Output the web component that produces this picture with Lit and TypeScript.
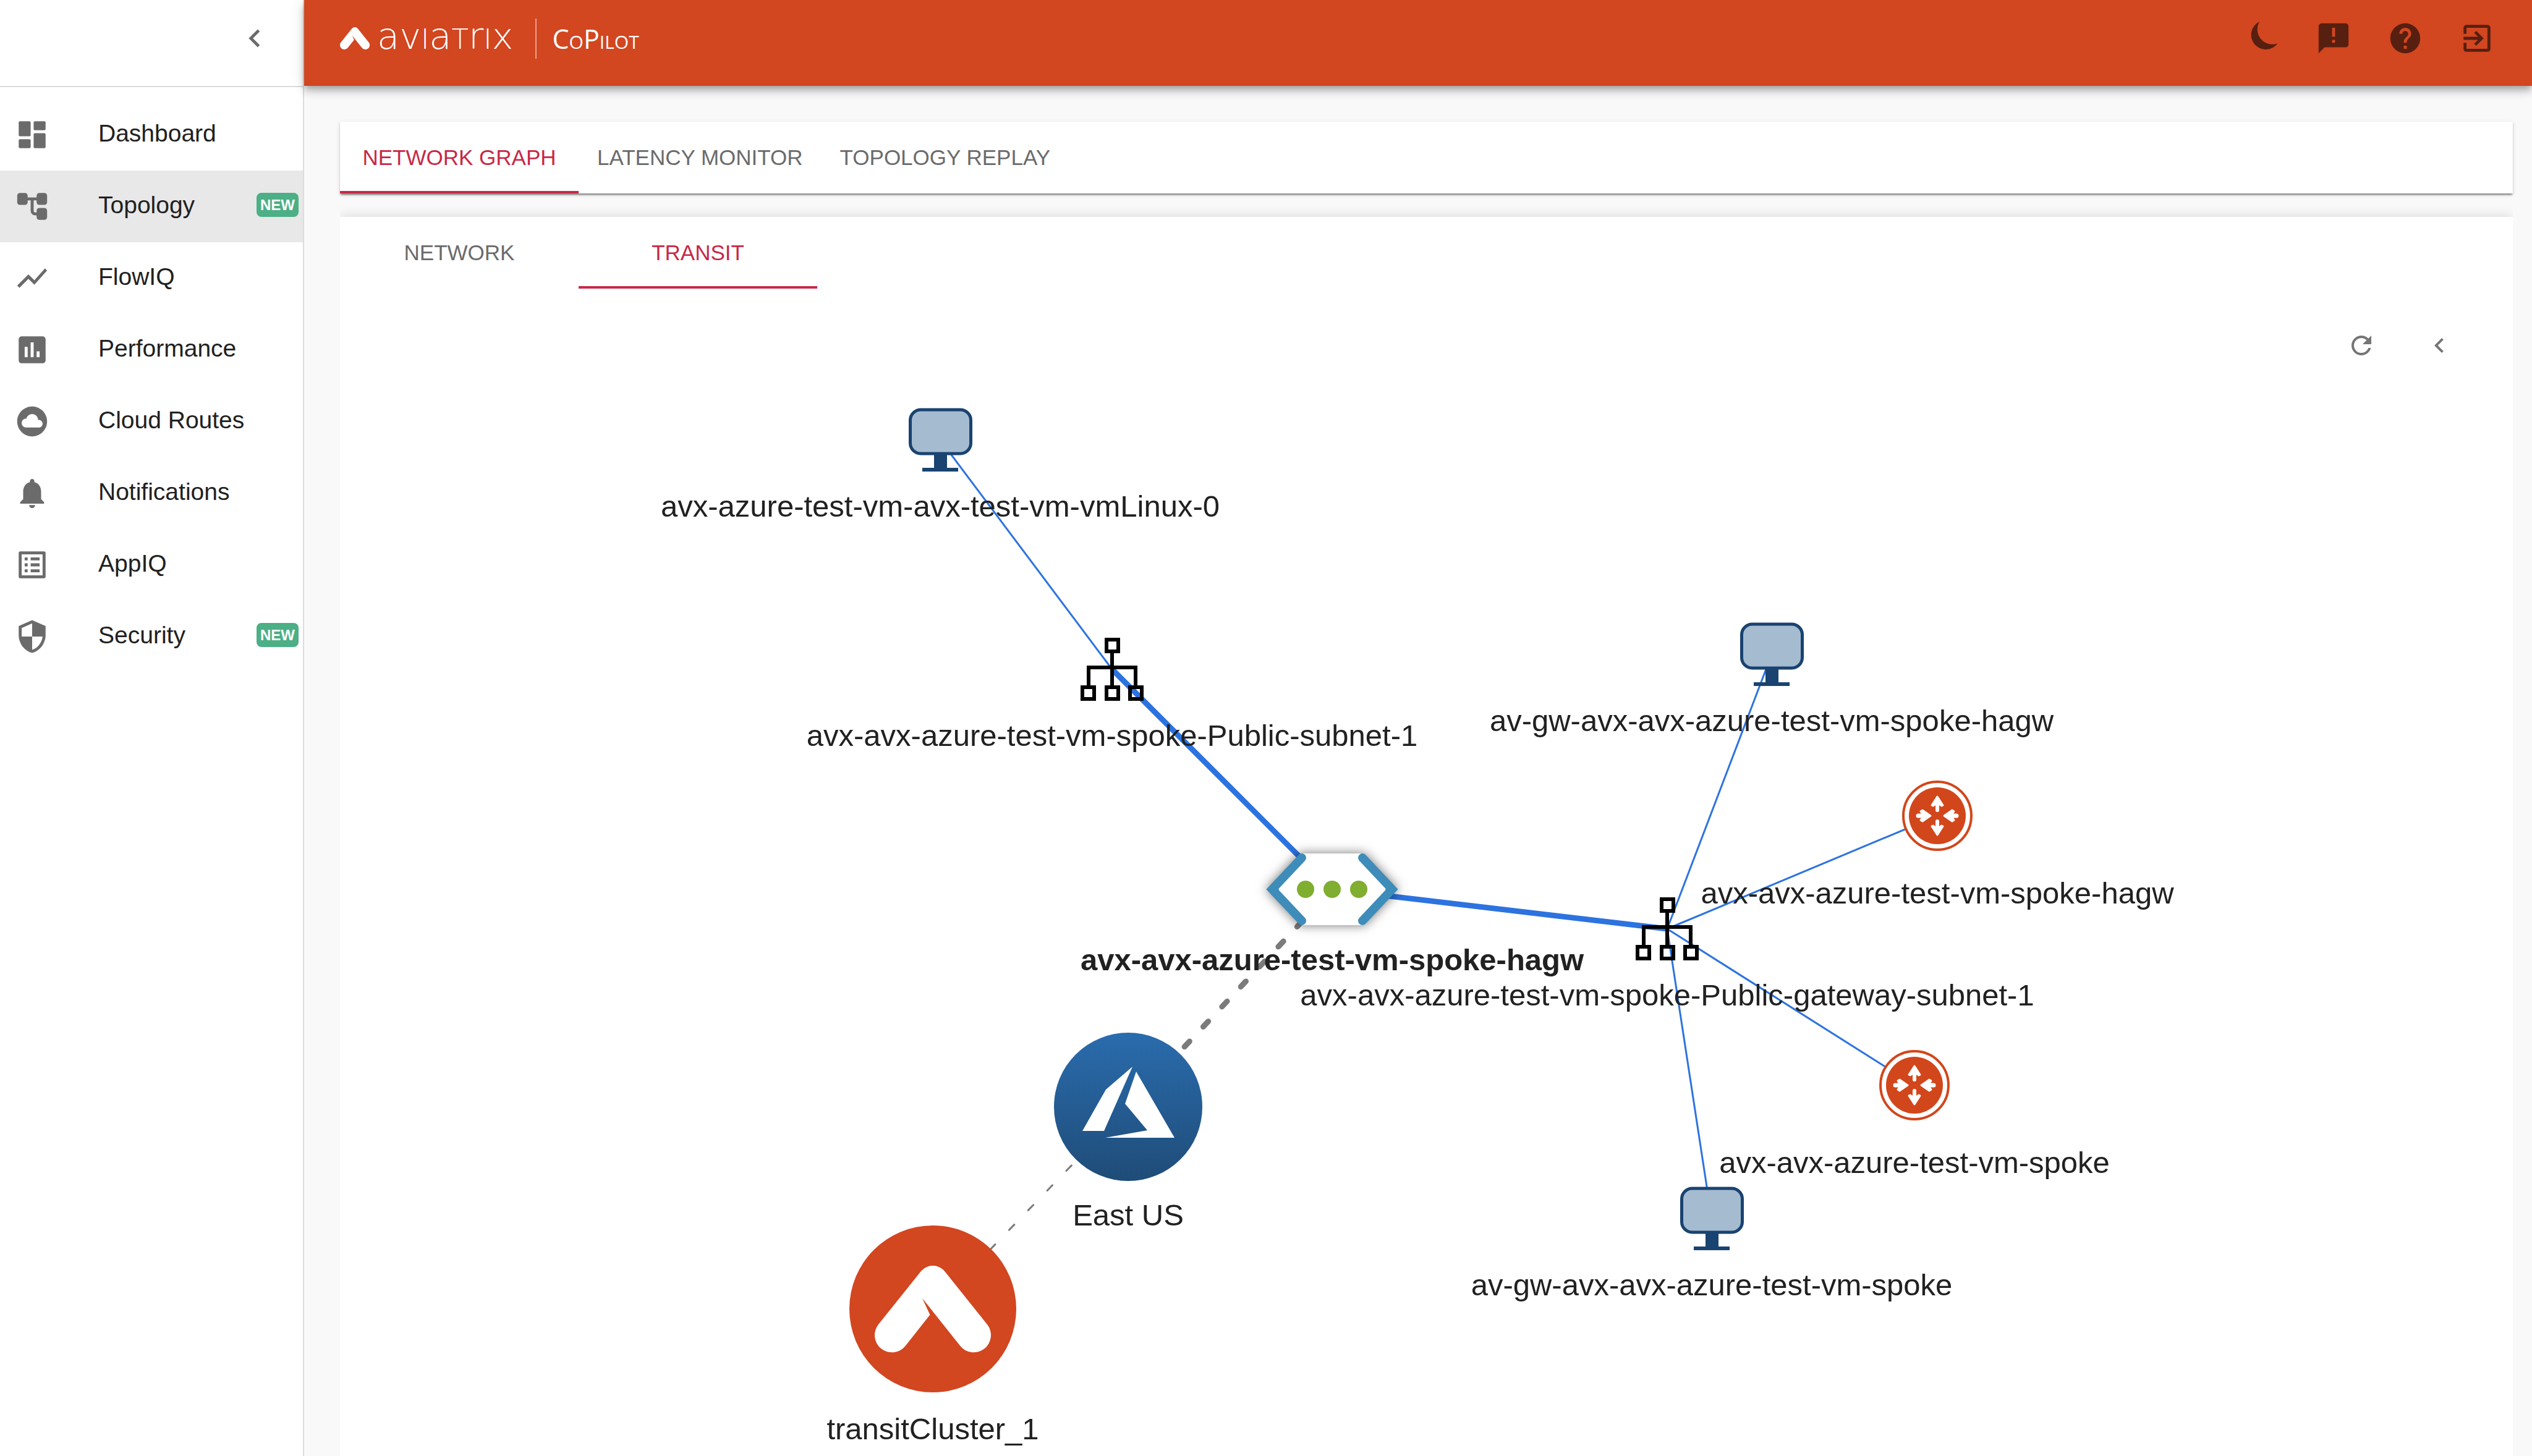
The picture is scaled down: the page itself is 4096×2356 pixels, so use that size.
import { LitElement, html, svg, css, nothing } from "lit";
import { customElement, property, state } from "lit/decorators.js";
import { classMap } from "lit/directives/class-map.js";

const MARK_PATH =
  "M-20 -63A26 26 0 0 1 20 -63L91 26A28.5 28.5 0 0 1 46 62L-17.6 -17.8L-4.7 9.8L-46 62A28.5 28.5 0 0 1 -91 26Z";

const ICONS = {
  dashboard: svg`<rect x="3" y="3" width="8" height="10" rx=".8"/><rect x="3" y="15" width="8" height="6" rx=".8"/><rect x="13" y="3" width="8" height="6" rx=".8"/><rect x="13" y="11" width="8" height="10" rx=".8"/>`,
  topology: svg`<rect x="2" y="3" width="7" height="8" rx="1.8"/><rect x="15" y="3" width="7" height="8" rx="1.8"/><rect x="15" y="13" width="7" height="8" rx="1.8"/><path d="M8 7h8M12 7v8a2 2 0 0 0 2 2h2" fill="none" stroke="currentColor" stroke-width="2"/>`,
  flow: svg`<path d="M3.5 18.49l6-6.01 4 4L22 6.92l-1.41-1.41-7.09 7.97-4-4L2 16.99z"/>`,
  performance: svg`<path d="M19 3H5c-1.1 0-2 .9-2 2v14c0 1.1.9 2 2 2h14c1.1 0 2-.9 2-2V5c0-1.1-.9-2-2-2zM9 17H7v-7h2v7zm4 0h-2V7h2v10zm4 0h-2v-4h2v4z"/>`,
  cloud: svg`<path d="M12 2C6.48 2 2 6.48 2 12s4.48 10 10 10 10-4.48 10-10S17.52 2 12 2zm4.5 14H8c-1.66 0-3-1.34-3-3s1.34-3 3-3l.14.01C8.58 8.28 10.13 7 12 7c2.21 0 4 1.79 4 4h.5c1.38 0 2.5 1.12 2.5 2.5S17.88 16 16.5 16z"/>`,
  bell: svg`<path d="M12 22c1.1 0 2-.9 2-2h-4c0 1.1.89 2 2 2zm6-6v-5c0-3.07-1.64-5.64-4.5-6.32V4c0-.83-.67-1.5-1.5-1.5s-1.5.67-1.5 1.5v.68C7.63 5.36 6 7.92 6 11v5l-2 2v1h16v-1l-2-2z"/>`,
  list: svg`<path d="M19 5v14H5V5h14m1.1-2H3.9c-.5 0-.9.4-.9.9v16.2c0 .4.4.9.9.9h16.2c.4 0 .9-.5.9-.9V3.9c0-.5-.5-.9-.9-.9zM11 7h6v2h-6V7zm0 4h6v2h-6v-2zm0 4h6v2h-6zM7 7h2v2H7zm0 4h2v2H7zm0 4h2v2H7z"/>`,
  security: svg`<path d="M12 1L3 5v6c0 5.55 3.84 10.74 9 12 5.16-1.26 9-6.45 9-12V5l-9-4zm0 10.99h7c-.53 4.12-3.28 7.79-7 8.94V12H5V6.3l7-3.11v8.8z"/>`,
  moon: svg`<path d="M10.5 .8A9.8 9.8 0 1 0 22.6 15.4A10 10 0 0 1 10.5 .8Z"/>`,
  feedback: svg`<path d="M20 2H4c-1.1 0-1.99.9-1.99 2L2 22l4-4h14c1.1 0 2-.9 2-2V4c0-1.1-.9-2-2-2zm-7 9h-2V5h2v6zm0 4h-2v-2h2v2z"/>`,
  help: svg`<path d="M12 2C6.48 2 2 6.48 2 12s4.48 10 10 10 10-4.48 10-10S17.52 2 12 2zm1 17h-2v-2h2v2zm2.07-7.75l-.9.92C13.45 12.9 13 13.5 13 15h-2v-.5c0-1.1.45-2.1 1.17-2.83l1.24-1.26c.37-.36.59-.86.59-1.41 0-1.1-.9-2-2-2s-2 .9-2 2H8c0-2.21 1.79-4 4-4s4 1.79 4 4c0 .88-.36 1.68-.93 2.25z"/>`,
  exit: svg`<path d="M10.09 15.59L11.5 17l5-5-5-5-1.41 1.41L12.67 11H3v2h9.67l-2.58 2.59zM19 3H5c-1.11 0-2 .9-2 2v4h2V5h14v14H5v-4H3v4c0 1.1.89 2 2 2h14c1.1 0 2-.9 2-2V5c0-1.1-.9-2-2-2z"/>`,
  chevron: svg`<path d="M15.41 7.41L14 6l-6 6 6 6 1.41-1.41L10.83 12z"/>`,
  refresh: svg`<path d="M17.65 6.35C16.2 4.9 14.21 4 12 4c-4.42 0-7.99 3.58-7.99 8s3.57 8 7.99 8c3.73 0 6.84-2.55 7.73-6h-2.08c-.82 2.33-3.04 4-5.65 4-3.31 0-6-2.69-6-6s2.69-6 6-6c1.66 0 3.14.69 4.22 1.78L13 11h7V4l-2.35 2.35z"/>`,
};

type IconName = keyof typeof ICONS;

@customElement("app-icon")
export class AppIcon extends LitElement {
  @property() name: IconName = "dashboard";

  static styles = css`
    :host {
      display: block;
      flex: none;
      width: 58px;
      height: 58px;
    }
    .icon {
      display: block;
      width: 100%;
      height: 100%;
      fill: currentColor;
    }
  `;

  render() {
    return html`<svg class="icon" viewBox="0 0 24 24" aria-hidden="true">${ICONS[this.name]}</svg>`;
  }
}

interface NavItem {
  label: string;
  icon: IconName;
  isNew?: boolean;
}

const NAV: NavItem[] = [
  { label: "Dashboard", icon: "dashboard" },
  { label: "Topology", icon: "topology", isNew: true },
  { label: "FlowIQ", icon: "flow" },
  { label: "Performance", icon: "performance" },
  { label: "Cloud Routes", icon: "cloud" },
  { label: "Notifications", icon: "bell" },
  { label: "AppIQ", icon: "list" },
  { label: "Security", icon: "security", isNew: true },
];

@customElement("app-sidebar")
export class AppSidebar extends LitElement {
  @state() private current = "Topology";

  static styles = css`
    :host {
      display: flex;
      flex-direction: column;
      background: #fff;
      border-right: 2px solid #dcdcdc;
      box-sizing: border-box;
      color: #212121;
    }
    .top {
      display: flex;
      justify-content: flex-end;
      align-items: center;
      height: 124px;
      padding: 0 49px 15px 0;
      border-bottom: 2px solid #dcdcdc;
    }
    .collapse {
      padding: 0;
      border: 0;
      background: none;
      color: #6b6b6b;
      cursor: pointer;
    }
    .menu {
      margin: 0;
      padding: 19px 0;
      list-style: none;
    }
    .link {
      display: flex;
      align-items: center;
      height: 116px;
      box-sizing: border-box;
      padding: 0 7px 0 23px;
      color: inherit;
      text-decoration: none;
    }
    .current {
      background: #e8e8e8;
    }
    .glyph {
      color: #6b6b6b;
    }
    .label {
      flex: 1;
      margin-left: 78px;
      padding-bottom: 5px;
      font-size: 39px;
      line-height: 58px;
    }
    .badge {
      padding: 0 6px;
      margin-bottom: 5px;
      border-radius: 8px;
      background: #4caf86;
      color: #fff;
      font-size: 24px;
      font-weight: 700;
      line-height: 39px;
    }
  `;

  render() {
    return html`
      <div class="top">
        <button class="collapse" aria-label="Collapse menu"><app-icon name="chevron"></app-icon></button>
      </div>
      <nav aria-label="Main">
        <ul class="menu">
          ${NAV.map(
            (item) => html`<li>
              <a
                class=${classMap({ link: true, current: item.label === this.current })}
                href="#${item.icon}"
                aria-current=${item.label === this.current ? "page" : nothing}
                @click=${() => (this.current = item.label)}
              >
                <app-icon class="glyph" name=${item.icon}></app-icon>
                <span class="label">${item.label}</span>
                ${item.isNew ? html`<span class="badge">NEW</span>` : nothing}
              </a>
            </li>`
          )}
        </ul>
      </nav>
    `;
  }
}

@customElement("app-header")
export class AppHeader extends LitElement {
  static styles = css`
    :host {
      display: flex;
      align-items: center;
      justify-content: space-between;
      height: 124px;
      padding: 0 60px 15px 58px;
      background: #d24620;
      color: #fff;
      box-shadow: 0 5px 10px -2px rgba(0, 0, 0, 0.2), 0 10px 12px rgba(0, 0, 0, 0.14),
        0 2px 24px rgba(0, 0, 0, 0.12);
    }
    .brand {
      display: flex;
      align-items: center;
      color: inherit;
      text-decoration: none;
      white-space: nowrap;
    }
    .mark {
      width: 48px;
      height: 36px;
      fill: currentColor;
    }
    .name {
      margin-left: 12px;
      padding-bottom: 9px;
      font-family: "DejaVu Sans", sans-serif;
      font-weight: 200;
      font-size: 59px;
      line-height: 56px;
    }
    .cap {
      font-variant: small-caps;
      font-size: 64px;
      line-height: 56px;
    }
    .product {
      margin-left: 36px;
      padding-left: 25px;
      border-left: 2px solid rgba(255, 255, 255, 0.5);
      font-family: "Open Sans", sans-serif;
      font-variant: small-caps;
      font-size: 43px;
      line-height: 65px;
    }
    .actions {
      display: flex;
      gap: 58px;
    }
    .action {
      padding: 0;
      border: 0;
      background: none;
      color: #571f0f;
      cursor: pointer;
    }
  `;

  render() {
    return html`
      <a class="brand" href="#home">
        <svg class="mark" viewBox="-97 -72 194 144" aria-hidden="true"><path d=${MARK_PATH} /></svg>
        <span class="name">av<span class="cap">i</span>a<span class="cap">t</span>r<span class="cap">i</span>x</span>
        <span class="product">CoPilot</span>
      </a>
      <div class="actions">
        <button class="action" aria-label="Dark mode"><app-icon name="moon"></app-icon></button>
        <button class="action" aria-label="Feedback"><app-icon name="feedback"></app-icon></button>
        <button class="action" aria-label="Help"><app-icon name="help"></app-icon></button>
        <button class="action" aria-label="Sign out"><app-icon name="exit"></app-icon></button>
      </div>
    `;
  }
}

@customElement("app-tabs")
export class AppTabs extends LitElement {
  @property({ attribute: false }) tabs: string[] = [];
  @property() active = "";

  static styles = css`
    :host {
      display: flex;
    }
    .tab {
      height: 116px;
      min-width: 386px;
      padding: 4px 30px 0;
      border: 0;
      border-bottom: 4px solid transparent;
      background: none;
      color: #6b6b6b;
      font-family: inherit;
      font-size: 35px;
      text-transform: uppercase;
      cursor: pointer;
    }
    .active {
      color: #c82846;
      border-bottom-color: #c82846;
    }
  `;

  render() {
    return this.tabs.map(
      (tab) => html`<button
        class=${classMap({ tab: true, active: tab === this.active })}
        role="tab"
        aria-selected=${tab === this.active ? "true" : "false"}
        @click=${() => (this.active = tab)}
      >${tab}</button>`
    );
  }
}

type NodeKind = "vm" | "subnet" | "vnet" | "region" | "transit" | "router";

interface GraphNode {
  id: string;
  kind: NodeKind;
  label: string;
  x: number;
  y: number;
}

interface GraphEdge {
  from: string;
  to: string;
  style: string;
}

const LABEL_DROP: Record<NodeKind, number> = {
  vm: 124,
  subnet: 124,
  vnet: 131,
  region: 192,
  transit: 211,
  router: 142,
};

const NODES: GraphNode[] = [
  { id: "vm0", kind: "vm", label: "avx-azure-test-vm-avx-test-vm-vmLinux-0", x: 1521, y: 712 },
  { id: "sub1", kind: "subnet", label: "avx-avx-azure-test-vm-spoke-Public-subnet-1", x: 1799, y: 1083 },
  { id: "vnet", kind: "vnet", label: "avx-avx-azure-test-vm-spoke-hagw", x: 2155, y: 1439 },
  { id: "region", kind: "region", label: "East US", x: 1825, y: 1791 },
  { id: "transit", kind: "transit", label: "transitCluster_1", x: 1509, y: 2118 },
  { id: "sub2", kind: "subnet", label: "avx-avx-azure-test-vm-spoke-Public-gateway-subnet-1", x: 2697, y: 1503 },
  { id: "vm1", kind: "vm", label: "av-gw-avx-avx-azure-test-vm-spoke-hagw", x: 2866, y: 1059 },
  { id: "rt1", kind: "router", label: "avx-avx-azure-test-vm-spoke-hagw", x: 3134, y: 1320 },
  { id: "rt2", kind: "router", label: "avx-avx-azure-test-vm-spoke", x: 3097, y: 1756 },
  { id: "vm2", kind: "vm", label: "av-gw-avx-avx-azure-test-vm-spoke", x: 2769, y: 1972 },
];

const EDGES: GraphEdge[] = [
  { from: "vm0", to: "sub1", style: "thin" },
  { from: "sub1", to: "vnet", style: "thick" },
  { from: "vnet", to: "sub2", style: "thick" },
  { from: "sub2", to: "vm1", style: "thin" },
  { from: "sub2", to: "rt1", style: "thin" },
  { from: "sub2", to: "rt2", style: "thin" },
  { from: "sub2", to: "vm2", style: "thin" },
  { from: "region", to: "vnet", style: "dashed-thick" },
  { from: "transit", to: "region", style: "dashed-thin" },
];

const arrowUp = svg`<path d="M0 -9V-24" stroke-width="6"/><path d="M0 -31L9 -17L7 -16L0 -21L-7 -16L-9 -17Z" stroke-width="3"/>`;

const arrowIn = svg`<path d="M0 -31V-18" stroke-width="7"/><path d="M0 -11L9 -24L7 -27L0 -22L-7 -27L-9 -24Z" stroke-width="3"/>`;

const SHAPES: Record<NodeKind, unknown> = {
  vm: svg`
    <rect class="screen" x="-48.5" y="-49" width="98" height="71" rx="17"/>
    <path class="stand" d="M-10 23H11V45H29V51H-29V45H-10Z"/>`,
  subnet: svg`<g class="tree">
    <rect x="-9" y="-48" width="19" height="19"/>
    <rect x="-48" y="29" width="19" height="19"/>
    <rect x="-9" y="29" width="19" height="19"/>
    <rect x="29" y="29" width="19" height="19"/>
    <path d="M0 -29V29M-38 29V-3H38V29"/></g>`,
  vnet: svg`<g class="vnet">
    <path fill="#fff" d="M-49 -58H49L97 0L49 58H-49L-97 0Z"/>
    <path class="bracket" d="M-49 -51L-97 0L-49 51"/>
    <path class="bracket" d="M49 -51L97 0L49 51"/>
    <path class="bracket-fill" d="M-97 -9L-82 -9Q-91 0 -82 9L-97 9ZM97 -9L82 -9Q91 0 82 9L97 9Z"/>
    </g>
    <g fill="#7fae30"><circle cx="-43" r="14"/><circle r="14"/><circle cx="43" r="14"/></g>`,
  region: svg`<circle r="120" fill="url(#azure)"/>
    <path fill="#fff" d="M7 -65L-36 -28L-74 39H-39ZM13 -57L-5 -5L31 38L-37 50H75Z"/>`,
  transit: svg`<circle r="135" fill="#d24620"/>
    <path fill="#fff" transform="scale(.966)" d=${MARK_PATH} />`,
  router: svg`<circle r="55" fill="#fff" stroke="#d2461b" stroke-width="4"/>
    <circle r="46" fill="#d2461b"/>
    <g class="arrows">
      <g>${arrowUp}</g><g transform="rotate(180)">${arrowUp}</g>
      <g transform="rotate(90)">${arrowIn}</g><g transform="rotate(-90)">${arrowIn}</g>
    </g>`,
};

@customElement("topology-graph")
export class TopologyGraph extends LitElement {
  static styles = css`
    :host {
      display: block;
    }
    .canvas {
      display: block;
      width: 100%;
      height: auto;
    }
    .thin,
    .thick {
      stroke: #2c73df;
      stroke-width: 3;
    }
    .thick {
      stroke-width: 9;
    }
    .dashed-thin,
    .dashed-thick {
      stroke: #7b7b7b;
      stroke-width: 3;
      stroke-linecap: round;
      stroke-dasharray: 12 32.4;
    }
    .dashed-thick {
      stroke-width: 9;
    }
    .screen {
      fill: #a5bbd0;
      stroke: #194370;
      stroke-width: 5;
    }
    .stand {
      fill: #194370;
    }
    .tree {
      fill: none;
      stroke: #000;
      stroke-width: 6;
    }
    .vnet {
      filter: drop-shadow(0 0 9px rgba(0, 0, 0, 0.55));
    }
    .bracket {
      fill: none;
      stroke: #3e8cb9;
      stroke-width: 14;
      stroke-linecap: round;
    }
    .bracket-fill {
      fill: #3e8cb9;
    }
    .arrows {
      fill: #fff;
      stroke: #fff;
      stroke-linecap: round;
      stroke-linejoin: round;
    }
    .caption {
      fill: #212121;
      font-size: 49px;
      text-anchor: middle;
    }
    .strong {
      font-weight: 700;
    }
  `;

  render() {
    const byId = new Map(NODES.map((n) => [n.id, n]));
    return html`<svg class="canvas" viewBox="550 612 3515 1744" role="img" aria-label="Transit topology">
      <defs>
        <linearGradient id="azure" x1="0" y1="0" x2="0" y2="1">
          <stop offset="0" stop-color="#2a6cad" />
          <stop offset="1" stop-color="#1f4c78" />
        </linearGradient>
      </defs>
      ${EDGES.map((e) => {
        const a = byId.get(e.from)!;
        const b = byId.get(e.to)!;
        return svg`<line class=${e.style} x1=${a.x} y1=${a.y} x2=${b.x} y2=${b.y} />`;
      })}
      ${NODES.map((n) => svg`<g transform="translate(${n.x} ${n.y})">${SHAPES[n.kind]}</g>`)}
      ${NODES.map(
        (n) => svg`<text class=${classMap({ caption: true, strong: n.kind === "vnet" })}
          x=${n.x} y=${n.y + LABEL_DROP[n.kind]}>${n.label}</text>`
      )}
    </svg>`;
  }
}

@customElement("app-root")
export class AppRoot extends LitElement {
  static styles = css`
    :host {
      display: grid;
      grid-template-columns: 492px minmax(0, 1fr);
      min-height: 100vh;
      background: #f9f9f9;
      font-family: "Liberation Sans", Arial, sans-serif;
    }
    .page {
      display: flex;
      flex-direction: column;
    }
    .header {
      position: relative;
      z-index: 1;
    }
    .content {
      display: flex;
      flex: 1;
      flex-direction: column;
      gap: 38px;
      padding: 58px 31px 0 58px;
    }
    .bar {
      background: #fff;
      box-shadow: 0 5px 2px -2px rgba(0, 0, 0, 0.2), 0 2px 2px rgba(0, 0, 0, 0.24),
        0 2px 7px rgba(0, 0, 0, 0.12);
    }
    .panel {
      flex: 1;
      background: #fff;
      box-shadow: 0 0 20px rgba(0, 0, 0, 0.14);
      clip-path: inset(-30px 0 0 0);
    }
    .tools {
      display: flex;
      justify-content: flex-end;
      gap: 20px;
      margin: 39px 66px 0 0;
    }
    .tool {
      padding: 29px;
      border: 0;
      background: none;
      color: #757575;
      cursor: pointer;
    }
    .small {
      width: 48px;
      height: 48px;
    }
  `;

  render() {
    return html`
      <app-sidebar></app-sidebar>
      <div class="page">
        <app-header class="header"></app-header>
        <main class="content">
          <app-tabs
            class="bar"
            role="tablist"
            .tabs=${["Network Graph", "Latency Monitor", "Topology Replay"]}
            active="Network Graph"
          ></app-tabs>
          <section class="panel">
            <app-tabs role="tablist" .tabs=${["Network", "Transit"]} active="Transit"></app-tabs>
            <div class="tools">
              <button class="tool" aria-label="Refresh"><app-icon class="small" name="refresh"></app-icon></button>
              <button class="tool" aria-label="Open panel"><app-icon class="small" name="chevron"></app-icon></button>
            </div>
            <topology-graph></topology-graph>
          </section>
        </main>
      </div>
    `;
  }
}
